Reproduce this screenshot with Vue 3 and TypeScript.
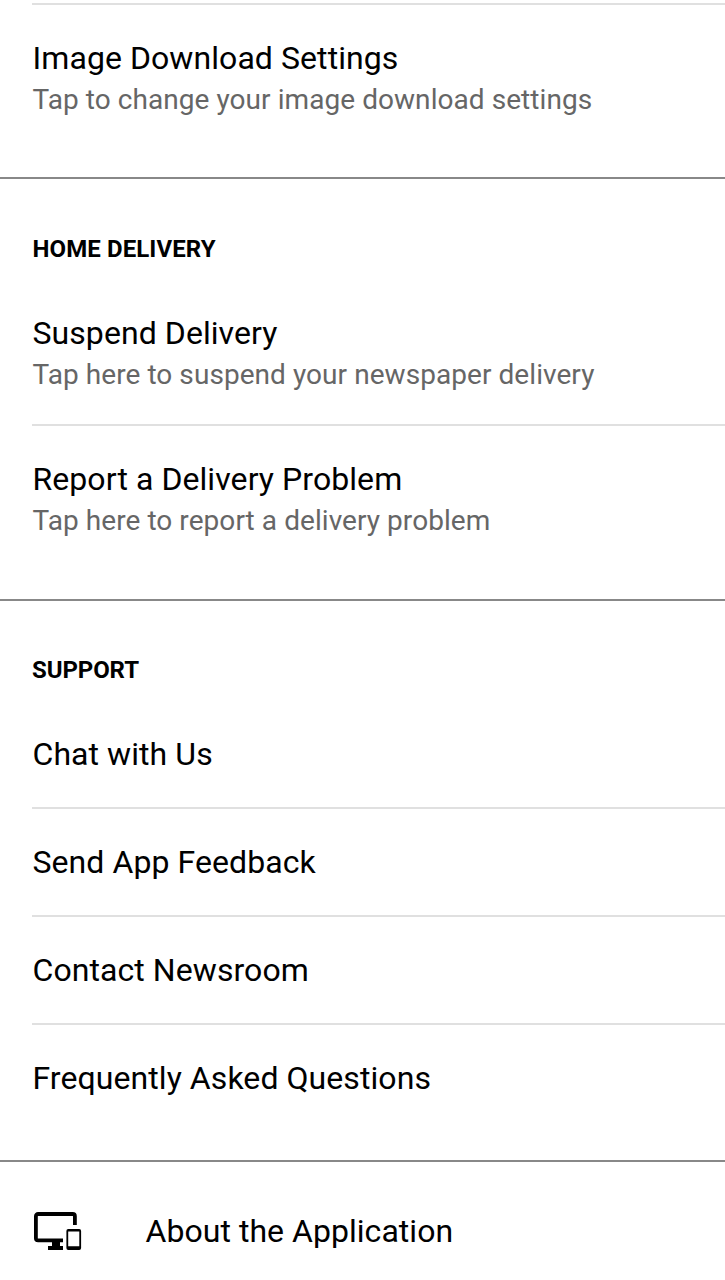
<script setup lang="ts">
interface Item { title: string; summary?: string }
interface Section { heading?: string; items: Item[] }

const sections: Section[] = [
  { items: [{ title: 'Image Download Settings', summary: 'Tap to change your image download settings' }] },
  {
    heading: 'HOME DELIVERY',
    items: [
      { title: 'Suspend Delivery', summary: 'Tap here to suspend your newspaper delivery' },
      { title: 'Report a Delivery Problem', summary: 'Tap here to report a delivery problem' },
    ],
  },
  {
    heading: 'SUPPORT',
    items: [
      { title: 'Chat with Us' },
      { title: 'Send App Feedback' },
      { title: 'Contact Newsroom' },
      { title: 'Frequently Asked Questions' },
    ],
  },
]
</script>

<template>
  <main class="settings">
    <div class="divider"></div>
    <section v-for="(section, i) in sections" :key="i" class="section">
      <h2 v-if="section.heading" class="heading">{{ section.heading }}</h2>
      <div v-for="item in section.items" :key="item.title" class="item" :class="{ detailed: item.summary }">
        <div class="title">{{ item.title }}</div>
        <div v-if="item.summary" class="summary">{{ item.summary }}</div>
      </div>
    </section>
    <div class="about">
      <svg class="devices" width="48" height="40" viewBox="0 0 48 40" aria-hidden="true">
        <path d="M40.900 14V5.200a2.200 2.200 0 0 0-2.200-2.200H4.100a2.200 2.200 0 0 0-2.200 2.200V27.200a2.200 2.200 0 0 0 2.200 2.200H29" fill="none" stroke="#000" stroke-width="3.800" />
        <path d="M18 30h8v5h3v4H14v-4h4z" />
        <path fill-rule="evenodd" d="M34.300 18H45.200a1.900 1.900 0 0 1 1.900 1.900V37.100a1.900 1.900 0 0 1-1.900 1.900H34.300a1.900 1.900 0 0 1-1.900-1.900V19.900a1.900 1.900 0 0 1 1.900-1.900zM34.200 20.400V35.200H45.300V20.400z" />
      </svg>
      <div class="title">About the Application</div>
    </div>
  </main>
</template>

<style>
body { margin: 0; background: #fff; }
</style>

<style scoped>
.settings { height: 1280px; overflow: hidden; padding-top: 3px; box-sizing: border-box; font-family: Roboto, sans-serif; color: #000; background: #fff; }
.divider { height: 2px; margin-left: 32px; background: #e0e0e0; }
.section { padding-bottom: 29px; border-bottom: 2px solid #888; }
.section:first-of-type { padding-bottom: 28px; }
.item { margin-left: 32px; padding: 33px 0 32px; border-bottom: 2px solid #e0e0e0; }
.item.detailed { padding-bottom: 29px; }
.item:last-child { border-bottom: 0; }
.title { padding-left: .5px; height: 41px; line-height: 41px; font-size: 32px; letter-spacing: .07px; white-space: nowrap; }
.summary { padding-left: .5px; height: 41px; line-height: 41px; font-size: 28px; letter-spacing: .06px; color: #666; white-space: nowrap; }
.heading { margin: 0; padding: 56px 0 17px 32.500px; height: 28px; font-size: 24px; line-height: 28px; font-weight: 700; letter-spacing: .1px; }
.section:nth-of-type(3) .heading { padding: 55px 0 17px 32px; letter-spacing: -.1px; }
.about { display: flex; padding: 49px 0 0 34px; }
.devices { flex: none; margin-right: 63.500px; }
.about .title { padding-left: 0; letter-spacing: .04px; }
</style>
